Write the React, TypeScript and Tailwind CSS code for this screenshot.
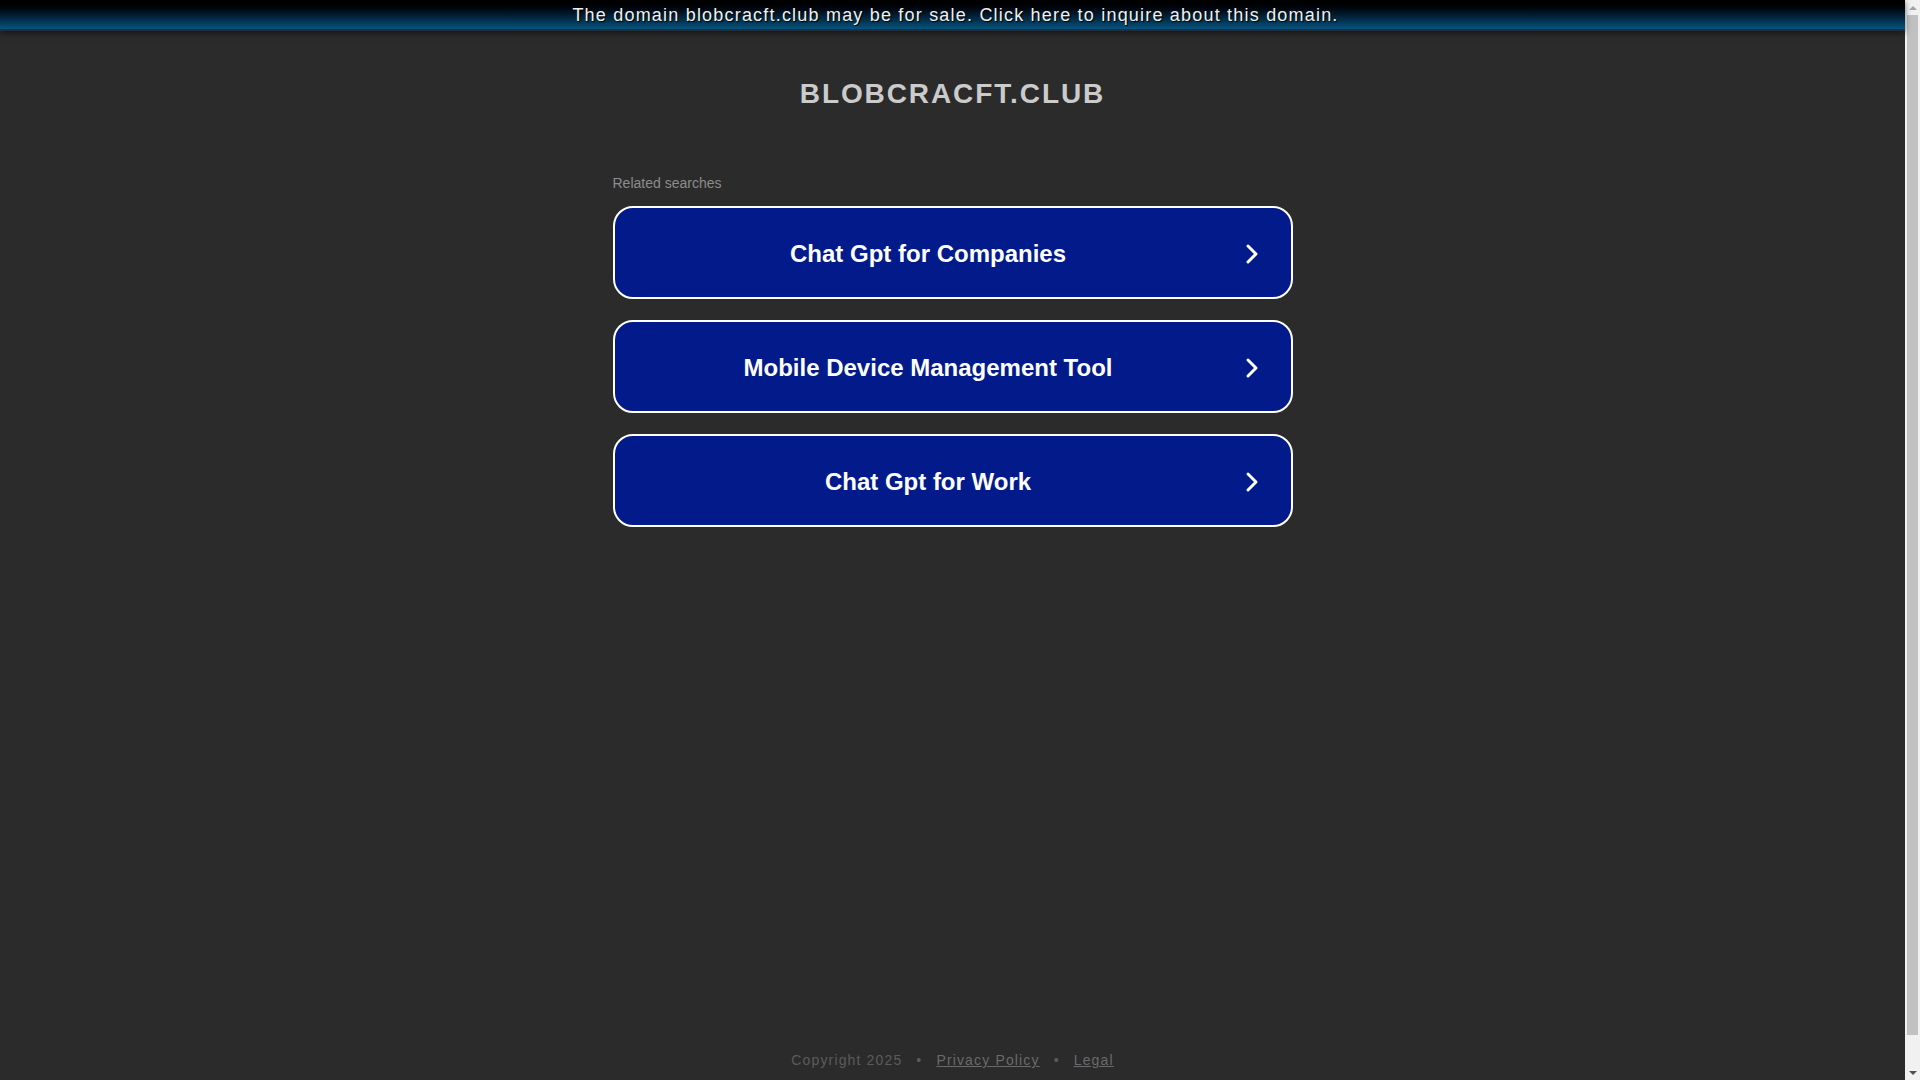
import React from 'react';

const searches = ['Chat Gpt for Companies', 'Mobile Device Management Tool', 'Chat Gpt for Work'];

const Chevron: React.FC = () => (
  <svg width="14" height="22" viewBox="0 0 14 22" fill="none" className="ml-[3px] shrink-0">
    <path d="M3 3l8 8-8 8" stroke="white" strokeWidth="3" strokeLinecap="round" strokeLinejoin="round" />
  </svg>
);

// classic browser scrollbar, as seen in the screenshot
const FakeScrollbar: React.FC = () => (
  <div className="fixed top-0 right-0 w-[15px] h-screen bg-[#f1f1f1] flex flex-col items-center">
    <div className="h-[15px] w-full flex items-center justify-center">
      <div className="w-0 h-0 border-x-[4px] border-x-transparent border-b-[4px] border-b-[#a3a3a3]"></div>
    </div>
    <div className="w-[11px] flex-1 mb-[30px] bg-[#c1c1c1]"></div>
    <div className="h-[15px] w-full flex items-center justify-center">
      <div className="w-0 h-0 border-x-[4px] border-x-transparent border-t-[4px] border-t-[#505050]"></div>
    </div>
  </div>
);

const App: React.FC = () => {
  return (
    <div className="bg-[#2b2b2b]">
      <div className="mr-[15px] min-h-[1110px] flex flex-col bg-[#2b2b2b] font-['Liberation_Sans',Arial,sans-serif]">
        {/* sale banner */}
        <div className="relative z-10 shadow-[0_2px_6px_rgba(0,0,0,0.55)]">
          <div className="h-[29px] pl-[6px] bg-linear-to-b from-[#000000] to-[#075481] flex items-center justify-center">
            <a className="text-[18px] leading-none tracking-[1.2px] text-[#f0f0f0] [text-shadow:1px_1px_1px_#000] cursor-pointer">
              The domain blobcracft.club may be for sale. Click here to inquire about this domain.
            </a>
          </div>
          <div className="h-[2px] bg-[#1d2f3a]"></div>
        </div>

        <main className="flex flex-col items-center">
          <h1 className="mt-[49px] text-[28px] leading-none font-bold tracking-[1.9px] text-[#cbcbcb]">
            BLOBCRACFT.CLUB
          </h1>

          <div className="w-[680px] mt-[67px]">
            <div className="text-[14px] leading-[16px] text-[#8c8c8c]">Related searches</div>
            <div className="mt-[15px] flex flex-col gap-[21px]">
              {searches.map((s) => (
                <a
                  key={s}
                  className="h-[93px] pt-[3px] flex items-center pr-[32px] rounded-[20px] border-2 border-white bg-[#021a8a] cursor-pointer"
                >
                  <span className="flex-1 text-center text-[24px] font-bold text-white">{s}</span>
                  <Chevron />
                </a>
              ))}
            </div>
          </div>
        </main>

        <footer className="mt-auto pb-[40px] flex items-center justify-center text-[14px] leading-[20px] tracking-[1.15px] text-[#5b5b5b]">
          <span>Copyright 2025</span>
          <span className="mx-[14px]">•</span>
          <a className="underline text-[#6a6a6a] cursor-pointer">Privacy Policy</a>
          <span className="mx-[14px]">•</span>
          <a className="underline text-[#6a6a6a] cursor-pointer">Legal</a>
        </footer>
      </div>
      <FakeScrollbar />
    </div>
  );
};

export default App;
